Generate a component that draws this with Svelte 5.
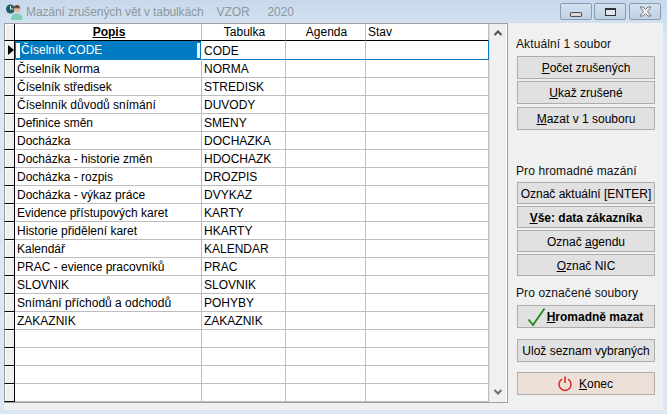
<script>
  const rows = [
    ['Číselník CODE', 'CODE'],
    ['Číselník Norma', 'NORMA'],
    ['Číselník středisek', 'STREDISK'],
    ['Číselnník důvodů snímání', 'DUVODY'],
    ['Definice směn', 'SMENY'],
    ['Docházka', 'DOCHAZKA'],
    ['Docházka - historie změn', 'HDOCHAZK'],
    ['Docházka - rozpis', 'DROZPIS'],
    ['Docházka - výkaz práce', 'DVYKAZ'],
    ['Evidence přístupových karet', 'KARTY'],
    ['Historie přidělení karet', 'HKARTY'],
    ['Kalendář', 'KALENDAR'],
    ['PRAC - evience pracovníků', 'PRAC'],
    ['SLOVNIK', 'SLOVNIK'],
    ['Snímání příchodů a odchodů', 'POHYBY'],
    ['ZAKAZNIK', 'ZAKAZNIK'],
    ['', ''], ['', ''], ['', ''], ['', '']
  ];
</script>

<div class="win">
  <header class="title">
    <svg class="appicon" width="18" height="18" viewBox="0 0 18 18">
      <circle cx="5.500" cy="6" r="4.500" fill="#1f5f66" />
      <path d="M5.500 3v3h2.500" stroke="#d8eeee" stroke-width="1" fill="none" />
      <path d="M6 17c0-4.500 2.500-6.500 6-6.500s5.500 2 5.500 6.500z" fill="#7fcdb8" />
      <circle cx="12" cy="6" r="3.200" fill="#e6b596" />
      <path d="M8.800 5.500c0-2.500 1.500-3.500 3.200-3.500s3.200 1 3.200 3.500c-2 0-4.500-.3-6.400 0z" fill="#6b4a35" />
    </svg>
    <span class="ttext">Mazání zrušených vět v tabulkách</span>
    <span class="ttext t2">VZOR</span>
    <span class="ttext t3">2020</span>
    <div class="ctrls">
      <div class="ctrl"><i class="min"></i></div>
      <div class="ctrl"><i class="max"></i></div>
      <div class="ctrl close">
        <svg width="13" height="11" viewBox="0 0 13 11"><path d="M1 1h3L6.500 3.500 9 1h3L8.500 5.500 12 10H9L6.500 7.500 4 10H1L4.500 5.500z" fill="#f4f4f4" stroke="#666b72" stroke-width=".9" /></svg>
      </div>
    </div>
  </header>

  <div class="client">
    <section class="grid">
      <div class="table">
        <div class="row head">
          <div class="ind"></div>
          <div class="c c1 hb">Popis</div>
          <div class="c c2 hc">Tabulka</div>
          <div class="c c3 hc">Agenda</div>
          <div class="c c4 hl">Stav</div>
        </div>
        {#each rows as r, i}
          <div class="row" class:sel={i === 0}>
            <div class="ind">{#if i === 0}<b class="arrow"></b>{/if}</div>
            <div class="c c1"><span class="txt">{r[0]}</span></div>
            <div class="c c2">{r[1]}</div>
            <div class="c c3"></div>
            <div class="c c4"></div>
          </div>
        {/each}
      </div>
      <div class="scroll">
        <svg width="10" height="8" viewBox="0 0 10 8"><path d="M1.500 6 5 2.500 8.500 6" fill="none" stroke="#505050" stroke-width="2" /></svg>
        <svg width="10" height="8" viewBox="0 0 10 8"><path d="M1.500 2 5 5.500 8.500 2" fill="none" stroke="#707070" stroke-width="2" /></svg>
      </div>
    </section>

    <aside class="side">
      <p class="lbl first">Aktuální 1 soubor</p>
      <div class="group g1">
        <button><span><u>P</u>očet zrušených</span></button>
        <button><span><u>U</u>kaž zrušené</span></button>
        <button class="third-btn"><span><u>M</u>azat v 1 souboru</span></button>
      </div>
      <p class="lbl second">Pro hromadné mazání</p>
      <div class="group g2">
        <button><span>Označ aktuální [ENTER]</span></button>
        <button class="bold"><span><u>V</u>še: data zákazníka</span></button>
        <button><span>Označ <u>a</u>gendu</span></button>
        <button><span><u>O</u>zna&#269; NIC</span></button>
      </div>
      <p class="lbl third">Pro označené soubory</p>
      <button class="bold big">
        <svg class="check" width="20" height="20" viewBox="0 0 20 20"><path d="M1.500 12.500 6 18 17.500 1.500" fill="none" stroke="#1b8a1b" stroke-width="1.800" /></svg>
        <span><u>H</u>romadně mazat</span>
      </button>
      <button class="big save"><span>Ulož seznam vybraných</span></button>
      <button class="big end">
        <svg width="16" height="16" viewBox="0 0 16 16"><path d="M5 3.200a6 6 0 1 0 6 0" fill="none" stroke="#e02020" stroke-width="1.500" /><path d="M8 .5v6.500" stroke="#e02020" stroke-width="1.500" /></svg>
        <span><u>K</u>onec</span>
      </button>
    </aside>
  </div>
</div>

<style>
  :global(body) { margin: 0; background: #dce8f4; }
  .win {
    width: 667px; height: 414px; box-sizing: border-box;
    padding: 0 4px 4px;
    display: flex; flex-direction: column;
    background: linear-gradient(#c6d9ec, #dbe7f3 40px);
    font: 12px "Liberation Sans", Arial, sans-serif;
    color: #000;
    overflow: hidden;
  }
  .title { height: 23px; flex: none; display: flex; align-items: center; }
  .appicon { margin-left: 1px; margin-right: 3px; }
  .ttext { color: #8e979e; font-size: 12px; letter-spacing: -.1px; }
  .t2 { margin-left: 13px; }
  .t3 { margin-left: 18px; }
  .ctrls { margin-left: auto; margin-right: 2px; align-self: flex-start; margin-top: 3px; display: flex; gap: 2px; }
  .ctrl {
    width: 32px; height: 17px; box-sizing: border-box; border: 1px solid #8a9bad; border-radius: 2px;
    background: linear-gradient(#d3e1ee, #bfd1e3);
    display: flex; align-items: center; justify-content: center;
  }
  .ctrl.close { margin-left: 1px; }
  .min { width: 12px; height: 5px; box-sizing: border-box; border: 1px solid #555; background: #d8d8d8; border-radius: 1px; margin-top: 5px; }
  .max { width: 11px; height: 8px; box-sizing: border-box; border: 1px solid #333; border-top-width: 2px; background: #dfe6ee; }
  .client { flex: 1; display: flex; height: 387px; background: #f0f0f0; }
  .grid {
    width: 504px; height: 380px; box-sizing: border-box;
    border-top: 1px solid #a0a0a0; border-right: 1px solid #a0a0a0; border-bottom: 1px solid #a0a0a0;
    background: #fff; display: flex; overflow: hidden; flex: none;
  }
  .table { width: 485px; flex: none; overflow: hidden; }
  .row { display: flex; height: 18px; box-sizing: border-box; }
  .row.head { height: 17px; background: #fff; }
  .ind {
    width: 11px; flex: none; box-sizing: border-box;
    background: #f0f0f0; border-right: 1px solid #000; border-bottom: 1px solid #000;
    border-left: 1px solid #a0a0a0;
    box-shadow: inset 1px 1px 0 #fff;
    position: relative;
  }
  .c {
    box-sizing: border-box; border-right: 1px solid #bdbdbd; border-bottom: 1px solid #bdbdbd;
    line-height: 19px; padding-left: 2px; white-space: nowrap; overflow: hidden; flex: none;
  }
  .c1 { width: 187px; }
  .c2 { width: 84px; }
  .c3 { width: 80px; }
  .c4 { width: 123px; }
  .head .c { border-bottom-color: #000; line-height: 17px; }
  .hb { font-weight: bold; text-align: center; text-decoration: underline; }
  .hc { text-align: center; }
  .hl { padding-left: 2px; }
  .row.sel { height: 19px; }
  .row.sel .c { border-bottom-color: #0a78c0; line-height: 20px; }
  .row.sel .c1 { background: #007ac0; color: #fff; padding-left: 1px; border-right-color: #fff; }
  .row.sel .c4 { border-right: 1px solid #0a78c0; }
  .row.sel .txt {
    display: block; height: 15px; line-height: 15px; margin-top: 2px;
    border-left: 4px solid #fff; padding-left: 1px;
    position: relative;
  }
  .row.sel .txt::after {
    content: ""; position: absolute; right: 1px; top: 0; width: 3px; height: 15px; background: #e8eef4;
  }
  .arrow {
    position: absolute; left: 3px; top: 4px;
    border-left: 6px solid #000; border-top: 5px solid transparent; border-bottom: 5px solid transparent;
  }
  .scroll {
    width: 17px; flex: none; background: #f0f0f0; border-left: 1px solid #e2e2e2;
    display: flex; flex-direction: column; justify-content: space-between; align-items: center;
    padding: 5px 0 6px; box-sizing: border-box;
  }
  .side {
    flex: 1; display: flex; flex-direction: column; padding-left: 9px;
  }
  .lbl { margin: 0 0 0 -1px; height: 14px; line-height: 14px; letter-spacing: .1px; color: #111; }
  .first { margin-top: 14px; margin-bottom: 5px; }
  .second { margin-top: 34px; margin-bottom: 4px; }
  .third { margin-top: 10px; margin-bottom: 5px; }
  .group { display: flex; flex-direction: column; }
  .g1 { gap: 2px; }
  .g1 button { height: 23px; }
  .g1 .third-btn { margin-top: 1px; }
  .g2 { gap: 2px; }
  button {
    width: 138px; height: 22px; box-sizing: border-box; padding: 1px 0 0;
    background: #e1e1e1; border: 1px solid #adadad; border-radius: 0;
    font: 12px "Liberation Sans", Arial, sans-serif; color: #000; white-space: nowrap;
    display: flex; align-items: center; justify-content: center;
  }
  .bold { font-weight: bold; }
  .big { height: 23px; }
  .big svg { flex: none; }
  .check { margin-left: -2px; }
  .save { margin-top: 11px; }
  .end { margin-top: 10px; background: #ecdfd7; gap: 6px; padding-right: 2px; }
</style>
